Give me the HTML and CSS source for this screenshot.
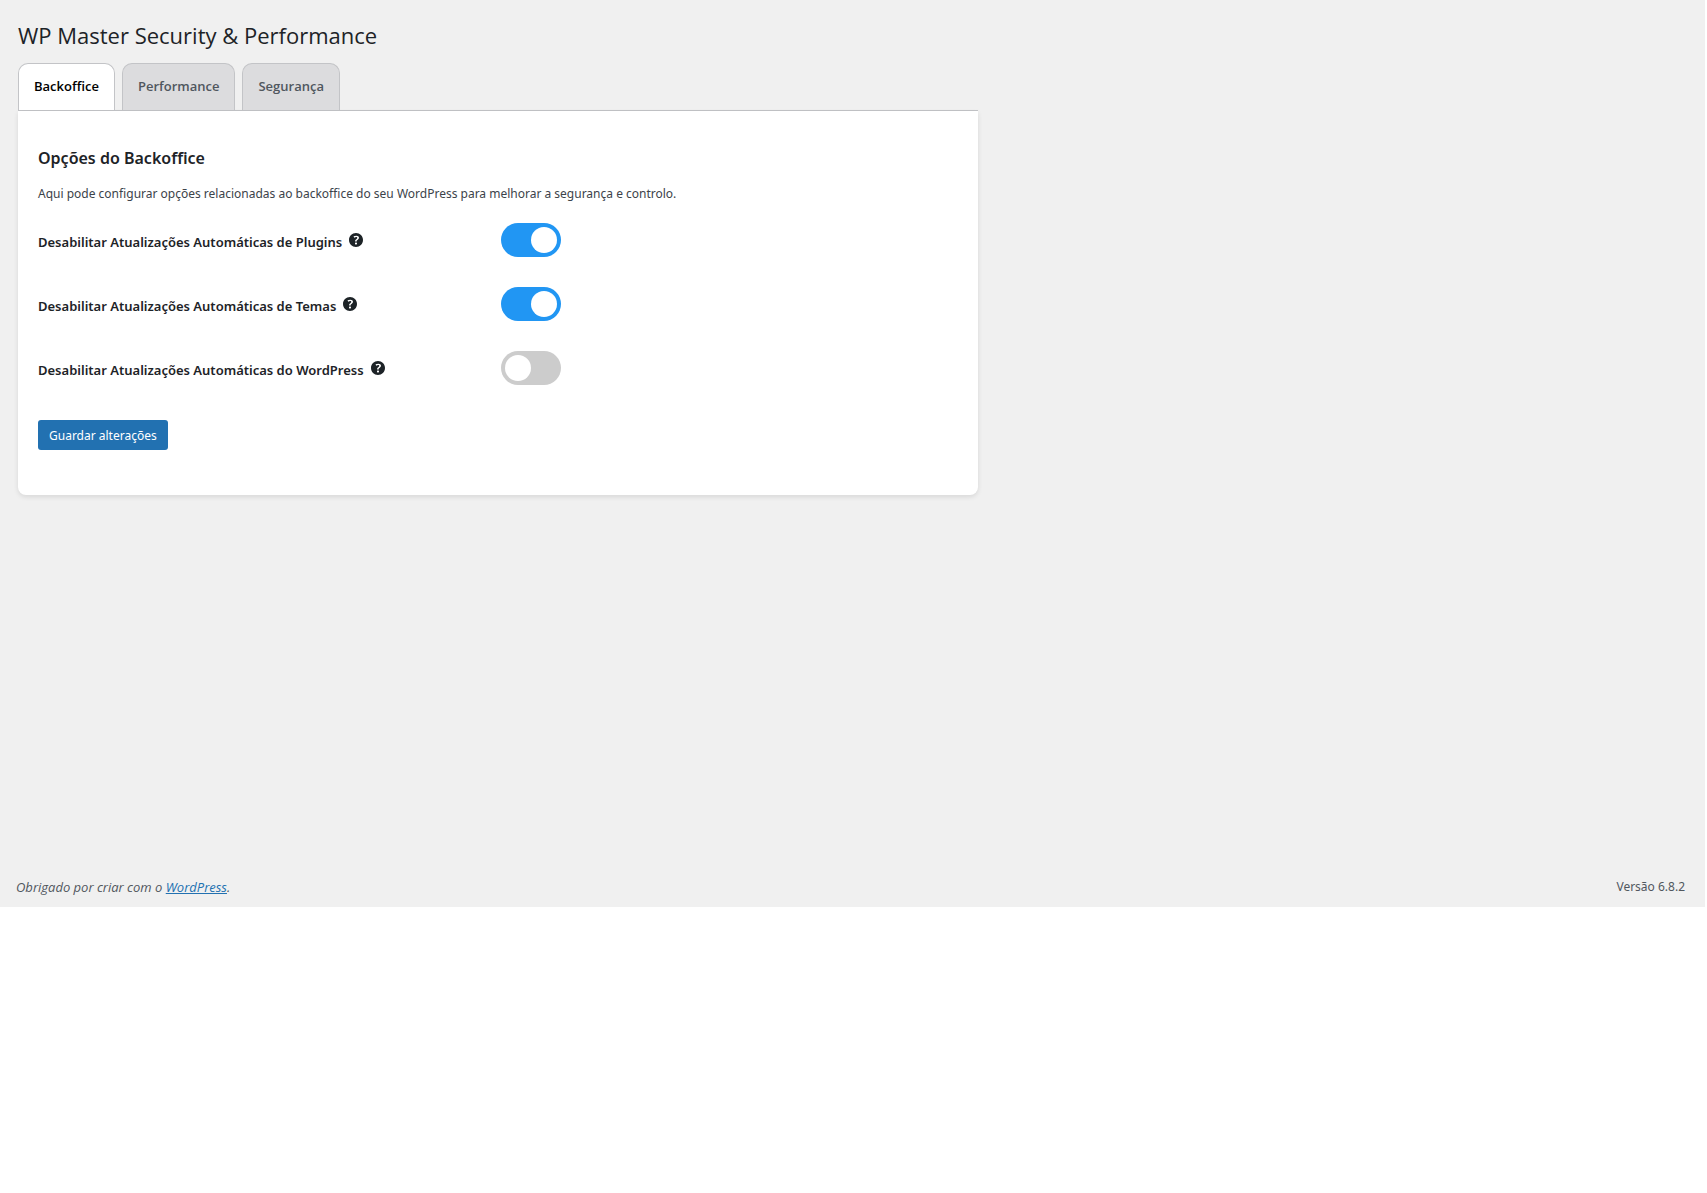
FILE: index.html
```html
<!DOCTYPE html>
<html lang="pt">
<head>
    <meta charset="UTF-8">
    <meta name="viewport" content="width=device-width, initial-scale=1.0">
    <title>WP Master Security &amp; Performance</title>
    <link rel="stylesheet" href="styles.css">
</head>
<body>
    <svg class="sprite" aria-hidden="true">
        <symbol id="icon-help" viewBox="0 0 20 20">
            <path fill-rule="evenodd" d="M17 10c0-3.87-3.14-7-7-7-3.87 0-7 3.13-7 7s3.13 7 7 7c3.86 0 7-3.13 7-7zm-6.3 1.48H9.14v-.43c0-.38.08-.7.24-.98s.46-.57.88-.89c.41-.29.68-.53.81-.71.14-.18.2-.39.2-.62 0-.25-.09-.44-.28-.58-.19-.13-.45-.19-.79-.19-.58 0-1.25.19-2 .57l-.64-1.28c.87-.49 1.8-.74 2.77-.74.81 0 1.45.2 1.92.58.48.39.71.91.71 1.55 0 .43-.09.8-.29 1.11-.19.32-.57.67-1.11 1.06-.38.28-.61.49-.71.63-.1.15-.15.34-.15.57v.35zm-1.47 2.74c-.18-.17-.27-.42-.27-.73 0-.33.08-.58.26-.75s.43-.25.77-.25c.32 0 .57.09.75.26s.27.42.27.74c0 .3-.09.55-.27.72-.18.18-.43.27-.75.27-.33 0-.58-.09-.76-.26z"/>
        </symbol>
    </svg>

    <div class="page">
        <main class="wrap">
            <h1>WP Master Security &amp; Performance</h1>

            <nav class="tabs">
                <a href="#backoffice" class="tab tab-active">Backoffice</a>
                <a href="#performance" class="tab">Performance</a>
                <a href="#seguranca" class="tab">Segurança</a>
            </nav>

            <form class="card" id="backoffice">
                <h2>Opções do Backoffice</h2>
                <p>Aqui pode configurar opções relacionadas ao backoffice do seu WordPress para melhorar a segurança e controlo.</p>

                <div class="option">
                    <div class="option-name">
                        <label for="plugins">Desabilitar Atualizações Automáticas de Plugins</label>
                        <svg class="help"><use href="#icon-help"/></svg>
                    </div>
                    <input type="checkbox" class="switch" id="plugins" checked>
                </div>
                <div class="option">
                    <div class="option-name">
                        <label for="temas">Desabilitar Atualizações Automáticas de Temas</label>
                        <svg class="help"><use href="#icon-help"/></svg>
                    </div>
                    <input type="checkbox" class="switch" id="temas" checked>
                </div>
                <div class="option">
                    <div class="option-name">
                        <label for="wordpress">Desabilitar Atualizações Automáticas do WordPress</label>
                        <svg class="help"><use href="#icon-help"/></svg>
                    </div>
                    <input type="checkbox" class="switch" id="wordpress">
                </div>

                <button type="submit" class="save">Guardar alterações</button>
            </form>
        </main>

        <footer class="footer">
            <span class="thanks">Obrigado por criar com o <a href="https://wordpress.org/">WordPress</a>.</span>
            <span>Versão 6.8.2</span>
        </footer>
    </div>
</body>
</html>
```
FILE: styles.css
```css
* {box-sizing: border-box;}

body {
    margin: 0;
    background: #ffffff;
    color: #3c434a;
    font-family: "Segoe UI", "Noto Sans", sans-serif;
    font-size: 12px;
    line-height: 20px;
}

.sprite {display: none;}

.page {
    display: flex;
    flex-direction: column;
    min-height: 76vh;
    margin-right: 2px;
    padding: 20px 20px 10px 16px;
    background: #f0f0f0;
}

.wrap {max-width: 962px; padding: 0 0 0 2px;}

h1, .tab, .thanks {font-family: "Segoe UI", "Open Sans", sans-serif;}

h1 {
    margin: 0 0 13px;
    color: #1d2327;
    font-size: 22px;
    font-weight: 400;
    line-height: 30px;
}

/* Tabs */
.tabs {
    display: flex;
    gap: 7px;
    border-bottom: 1px solid #c3c4c7;
}

.tab {
    padding: 10px 15px 12px;
    border: 1px solid #c3c4c7;
    border-bottom: 0;
    border-radius: 10px 10px 0 0;
    background: #dcdcde;
    color: #50575e;
    font-size: 13px;
    font-weight: 600;
    line-height: 24px;
    text-decoration: none;
}

.tab:hover {background: #ffffff;}
.tab-active {background: #ffffff; color: #000000;}

/* Options card */
.card {
    padding: 35px 20px 45px;
    border-radius: 0 0 8px 8px;
    background: #ffffff;
    box-shadow: 0 2px 5px rgba(0, 0, 0, 0.1);
}

h2 {
    margin: 0 0 14px;
    color: #1d2327;
    font-size: 16px;
    font-weight: 600;
    line-height: 24px;
}

p {margin: 0 0 19px;}

.option {
    display: grid;
    grid-template-columns: 1fr 1fr;
    gap: 6px;
    margin-bottom: 30px;
}

.option-name {
    display: flex;
    align-items: center;
    gap: 4px;
    color: #1d2327;
    font-size: 13px;
    font-weight: 600;
}

.option-name label {padding-top: 4px;}
.help {width: 20px; height: 20px; fill: #1d2327;}

/* Toggle switch */
.switch {
    appearance: none;
    display: flex;
    align-items: center;
    width: 60px;
    height: 34px;
    margin: 0;
    padding: 4px;
    border-radius: 17px;
    background: #cccccc;
    cursor: pointer;
}

.switch::before {
    content: "";
    width: 26px;
    height: 26px;
    border-radius: 50%;
    background: #ffffff;
}

.switch:checked {justify-content: flex-end; background: #2196f3;}

.save {
    display: block;
    margin-top: 35px;
    padding: 2px 11px 0;
    border: 0;
    border-radius: 3px;
    background: #2271b1;
    color: #ffffff;
    font: inherit;
    line-height: 28px;
    cursor: pointer;
}

.save:hover {background: #135e96;}

.footer {
    display: flex;
    justify-content: space-between;
    margin-top: auto;
    color: #50575e;
}

.thanks {font-size: 13px; font-style: italic;}
.footer a {color: #2271b1;}
```
